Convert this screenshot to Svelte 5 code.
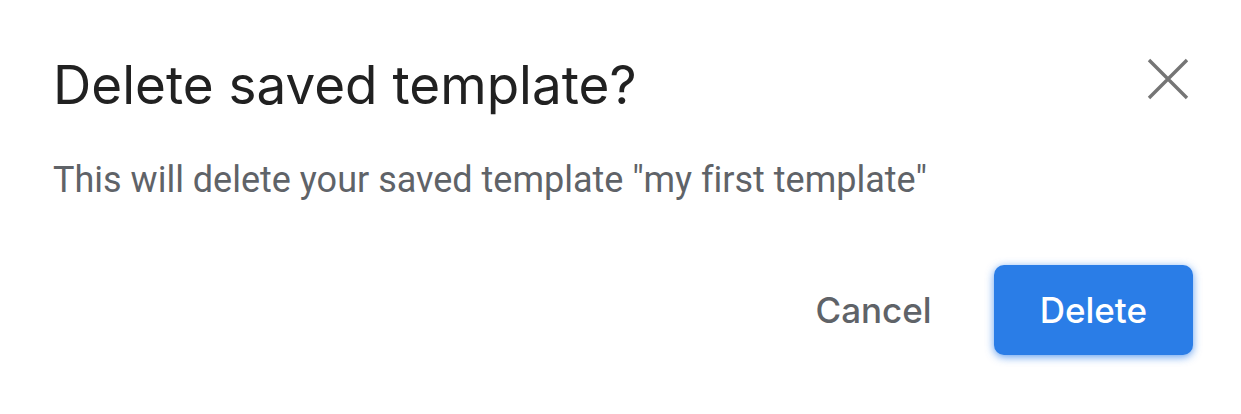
<script>
  let open = $state(true);
  const close = () => (open = false);
</script>

{#if open}
  <div class="dialog" role="dialog" aria-labelledby="title" aria-describedby="message">
    <header>
      <h1 id="title">Delete saved template?</h1>
      <button class="close" aria-label="Close" onclick={close}>
        <svg viewBox="0 0 42 42" aria-hidden="true">
          <path d="M2 2L40 40M40 2L2 40" />
        </svg>
      </button>
    </header>
    <p id="message">This will delete your saved template "my first template"</p>
    <footer>
      <button class="action" onclick={close}>Cancel</button>
      <button class="action primary" onclick={close}>Delete</button>
    </footer>
  </div>
{/if}

<style>
  :global(body) {
    background: #fff;
  }
  .dialog {
    box-sizing: border-box;
    padding: 48px 48px 56px 53px;
    font-family: Roboto, Arial, sans-serif;
  }
  header {
    display: flex;
    align-items: flex-start;
    justify-content: space-between;
    gap: 24px;
  }
  h1 {
    margin: 0;
    font: 400 53px/74px "Google Sans", Inter, sans-serif;
    color: #212121;
  }
  button {
    border: 0;
    padding: 0;
    background: none;
    cursor: pointer;
  }
  .close {
    display: flex;
    margin: 10px 4px 0 0;
  }
  svg {
    width: 42px;
    height: 42px;
    fill: none;
    stroke: #757575;
    stroke-width: 3.4;
  }
  p {
    margin: 34px 0 0;
    font-size: 36px;
    line-height: 48px;
    font-variant-ligatures: none;
    color: #5f6368;
  }
  footer {
    display: flex;
    justify-content: flex-end;
    gap: 16px;
    margin-top: 61px;
  }
  .action {
    padding: 0 46px;
    height: 90px;
    border-radius: 10px;
    font: 500 35px/48px "Google Sans", Inter, sans-serif;
    color: #5f6368;
  }
  .primary {
    background: #2a7de7;
    color: #fff;
    box-shadow: 0 2px 8px #1a73e8b0;
  }
</style>
